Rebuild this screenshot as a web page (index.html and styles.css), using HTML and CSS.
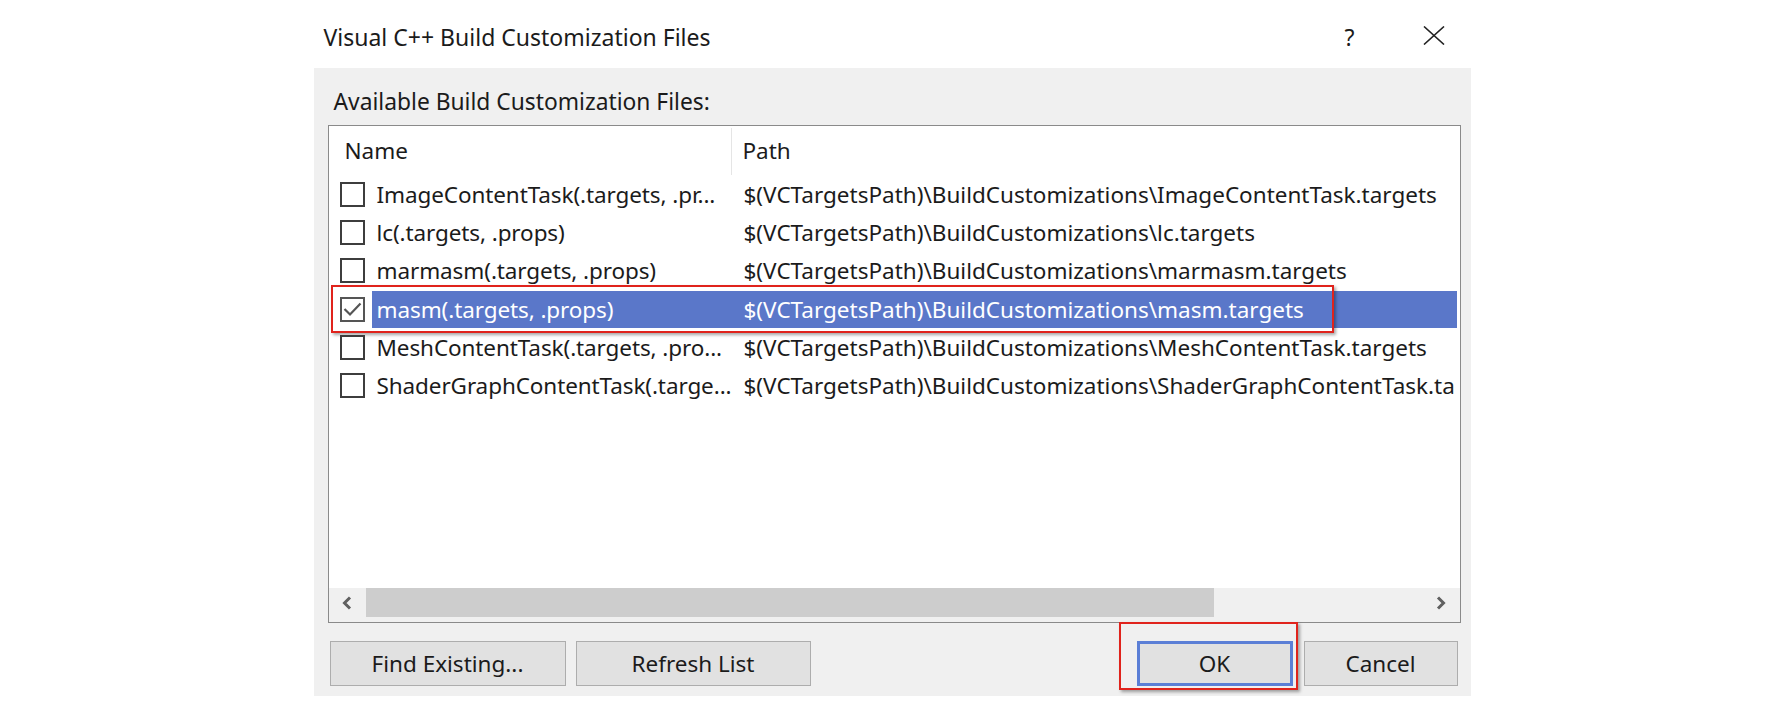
FILE: index.html
```html
<!DOCTYPE html>
<html lang="en">
<head>
<meta charset="utf-8">
<title>Visual C++ Build Customization Files</title>
<link rel="stylesheet" href="styles.css">
</head>
<body>
<div class="dialog">
  <div class="titlebar">
    <span class="title">Visual C++ Build Customization Files</span>
    <span class="help">?</span>
    <span class="close">
      <svg width="22" height="19" viewBox="0 0 22 19"><path d="M1 0.5 L21 18.5 M21 0.5 L1 18.5" stroke="#222" stroke-width="1.6" fill="none"/></svg>
    </span>
  </div>
  <div class="panel">
    <div class="label">Available Build Customization Files:</div>
    <div class="listbox">
      <div class="header">
        <div class="hname">Name</div>
        <div class="hpath">Path</div>
      </div>
      <div class="rows">
        <div class="row">
          <span class="cb"></span>
          <div class="cells"><span class="name">ImageContentTask(.targets, .pr...</span><span class="path">$(VCTargetsPath)\BuildCustomizations\ImageContentTask.targets</span></div>
        </div>
        <div class="row">
          <span class="cb"></span>
          <div class="cells"><span class="name">lc(.targets, .props)</span><span class="path">$(VCTargetsPath)\BuildCustomizations\lc.targets</span></div>
        </div>
        <div class="row">
          <span class="cb"></span>
          <div class="cells"><span class="name">marmasm(.targets, .props)</span><span class="path">$(VCTargetsPath)\BuildCustomizations\marmasm.targets</span></div>
        </div>
        <div class="row row-selected">
          <span class="cb cb-checked">
            <svg width="21" height="21" viewBox="0 0 21 21"><path d="M2.5 10 L8 15.5 L18.5 4.5" stroke="#555" stroke-width="2.2" fill="none"/></svg>
          </span>
          <div class="cells"><span class="name">masm(.targets, .props)</span><span class="path">$(VCTargetsPath)\BuildCustomizations\masm.targets</span></div>
          <span class="mark mark-row"></span>
        </div>
        <div class="row">
          <span class="cb"></span>
          <div class="cells"><span class="name">MeshContentTask(.targets, .pro...</span><span class="path">$(VCTargetsPath)\BuildCustomizations\MeshContentTask.targets</span></div>
        </div>
        <div class="row">
          <span class="cb"></span>
          <div class="cells"><span class="name">ShaderGraphContentTask(.targe...</span><span class="path">$(VCTargetsPath)\BuildCustomizations\ShaderGraphContentTask.ta</span></div>
        </div>
      </div>
      <div class="hscroll">
        <span class="arrow">
          <svg width="12" height="14" viewBox="0 0 12 14"><path d="M9 1.5 L3.5 7 L9 12.5" stroke="#606060" stroke-width="3" fill="none"/></svg>
        </span>
        <div class="track"><div class="thumb"></div></div>
        <span class="arrow">
          <svg width="12" height="14" viewBox="0 0 12 14"><path d="M3 1.5 L8.5 7 L3 12.5" stroke="#606060" stroke-width="3" fill="none"/></svg>
        </span>
      </div>
    </div>
    <div class="buttons">
      <button class="btn btn-find">Find Existing...</button>
      <button class="btn btn-refresh">Refresh List</button>
      <span class="spacer"></span>
      <button class="btn btn-ok">OK<span class="mark mark-ok"></span></button>
      <button class="btn btn-cancel">Cancel</button>
    </div>
  </div>
</div>
</body>
</html>
```
FILE: styles.css
```css
* { box-sizing: border-box; }

html, body {
  margin: 0;
  padding: 0;
  background: #ffffff;
}

body {
  font-family: "Noto Sans", "Open Sans", sans-serif;
  font-size: 22.5px;
  color: #1b1b1b;
}

.dialog {
  width: 1157px;
  margin: 0 auto;
}

.titlebar {
  height: 68px;
  display: flex;
  align-items: flex-start;
  padding: 22px 0 0 10px;
  background: #ffffff;
  line-height: 30px;
}

.title {
  flex: 1;
  font-size: 23px;
}

.help {
  width: 30px;
  font-size: 23px;
  margin-right: 58px;
  text-align: center;
}

.close {
  display: flex;
  margin-top: 4px;
  margin-right: 26px;
}

.panel {
  height: 628px;
  background: #f0f0f0;
  padding: 19px 10px 0 14px;
}

.label {
  padding-left: 6px;
  line-height: 30px;
  height: 38px;
  font-size: 22.8px;
}

.listbox {
  height: 498px;
  border: 1px solid #8a8a8a;
  background: #ffffff;
  display: flex;
  flex-direction: column;
}

.header {
  height: 49px;
  display: flex;
  align-items: stretch;
  flex: none;
}

.hname {
  width: 403px;
  padding: 7px 0 0 16px;
  border-right: 1px solid #e5e5e5;
  margin-top: 2px;
}

.hpath {
  padding: 9px 0 0 11px;
}

.rows {
  flex: 1;
  overflow: hidden;
}

.row {
  position: relative;
  height: 38.3px;
  display: flex;
  align-items: center;
  padding: 0 3px 0 11px;
  line-height: 37px;
  white-space: nowrap;
}

.cb {
  flex: none;
  width: 25px;
  height: 25px;
  border: 2px solid #3d3d3d;
  background: #ffffff;
  display: flex;
  align-items: center;
  justify-content: center;
}

.cb-checked {
  border-color: #555555;
}

.cb svg { display: block; }

.cells {
  flex: 1;
  min-width: 0;
  display: flex;
  margin-left: 7px;
  height: 37px;
  overflow: hidden;
}

.name {
  flex: none;
  width: 360px;
  padding-left: 5px;
  letter-spacing: -0.1px;
}

.path {
  flex: none;
  padding-left: 12px;
}

.row-selected .cells {
  background: #5a77c9;
  color: #ffffff;
}

.mark {
  position: absolute;
  border: 2px solid #e0231c;
  box-shadow: 2px 2px 3px rgba(0, 0, 0, 0.35);
  pointer-events: none;
}

.mark-row {
  left: 2px;
  top: -5px;
  width: 1003px;
  height: 48px;
}

.hscroll {
  flex: none;
  height: 34px;
  display: flex;
  align-items: flex-start;
  background: #f0f0f0;
}

.arrow {
  flex: none;
  width: 37px;
  height: 29px;
  display: flex;
  align-items: center;
  justify-content: center;
}

.track {
  flex: 1;
  height: 29px;
}

.thumb {
  width: 848px;
  height: 29px;
  background: #cdcdcd;
}

.buttons {
  display: flex;
  margin-top: 18px;
  padding-left: 2px;
  padding-right: 3px;
}

.spacer { flex: 1; }

.btn {
  position: relative;
  height: 45px;
  font-family: "Noto Sans", "Open Sans", sans-serif;
  font-size: 22.5px;
  color: #1b1b1b;
  background: #e1e1e1;
  border: 1px solid #adadad;
  padding: 0;
}

.btn-find { width: 236px; }
.btn-refresh { width: 235px; margin-left: 10px; }
.btn-ok {
  width: 156px;
  border: 3px solid #5b7fd6;
}
.btn-cancel { width: 154px; margin-left: 11px; }

.mark-ok {
  left: -21px;
  top: -22px;
  width: 179px;
  height: 68px;
}
```
